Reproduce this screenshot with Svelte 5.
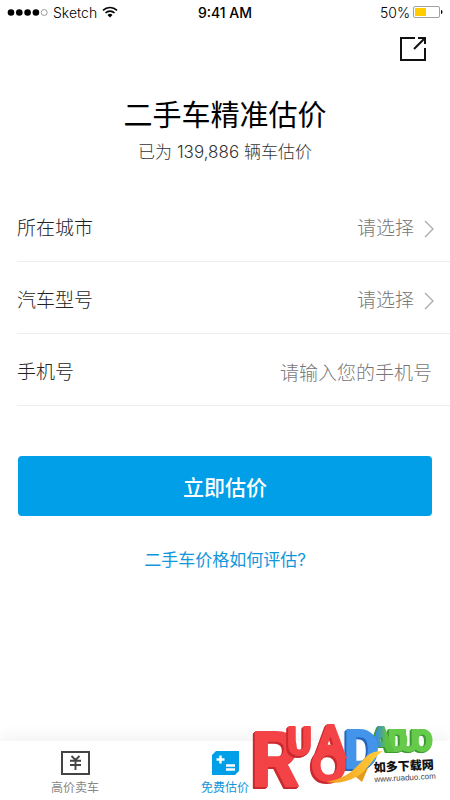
<script lang="ts">
const rows = [
	{ id: 'city', label: '所在城市' },
	{ id: 'model', label: '汽车型号' },
];

let phone = $state('');
</script>

<div class="screen">
	<header class="status-bar">
		<div class="carrier">
			<svg width="41" height="9" viewBox="0 0 41 9" aria-hidden="true">
				<circle cx="4" cy="4.5" r="3.3" />
				<circle cx="12.3" cy="4.5" r="3.3" />
				<circle cx="20.6" cy="4.5" r="3.3" />
				<circle cx="28.9" cy="4.5" r="3.3" />
				<circle cx="37.2" cy="4.5" r="3" fill="none" stroke="#777" stroke-width=".7" />
			</svg>
			<span>Sketch</span>
			<svg width="16" height="12" viewBox="0 0 16 12" aria-hidden="true">
				<path d="M1 4.4a10 10 0 0 1 14 0M3.5 7a6.4 6.4 0 0 1 9 0" fill="none" stroke="#000" stroke-width="1.6" />
				<path d="M5.5 8.9a3.6 3.6 0 0 1 5 0L8 11.4z" />
			</svg>
		</div>
		<time>9:41 AM</time>
		<div class="battery">
			<span>50%</span>
			<svg width="30" height="12" viewBox="0 0 30 12" aria-hidden="true">
				<rect x=".5" y=".5" width="26" height="11" rx="1.5" fill="#fff" stroke="#888" stroke-width=".8" />
				<rect x="2" y="2" width="11" height="8" fill="#fc0" />
				<path d="M28 4q1.5 0 1.5 2T28 8z" />
			</svg>
		</div>
	</header>

	<div class="toolbar">
		<button class="share" aria-label="分享">
			<svg width="28" height="26" viewBox="0 0 28 26" fill="none" stroke="#111" stroke-width="2">
				<path d="M16 2H2v22h24V12" />
				<path d="M19 2h7v6M25.5 2.5 15 13" />
			</svg>
		</button>
	</div>

	<main>
		<h1>二手车精准估价</h1>
		<p class="count">已为 139,886 辆车估价</p>

		<form onsubmit={(e) => e.preventDefault()}>
			{#each rows as row}
				<div class="row">
					<span id={row.id}>{row.label}</span>
					<button type="button" class="picker" aria-describedby={row.id}>
						请选择
						<svg width="10" height="18" viewBox="0 0 10 18" fill="none" stroke="#aaa" stroke-width="1.3" aria-hidden="true">
							<path d="m1 1 8 8-8 8" />
						</svg>
					</button>
				</div>
			{/each}
			<div class="row">
				<label for="phone">手机号</label>
				<input id="phone" type="tel" placeholder="请输入您的手机号" bind:value={phone} />
			</div>
			<button class="submit">立即估价</button>
		</form>

		<a class="help" href="#help">二手车价格如何评估?</a>
	</main>

	<nav>
		<a href="#sell">
			<svg width="29" height="24" viewBox="0 0 29 24" fill="none" stroke="#444" aria-hidden="true">
				<rect x="1" y="1" width="27" height="22" stroke-width="2" />
				<path d="m10.5 5 4 4 4-4M9 9.8h11M9 14h11M14.5 9v10" stroke-width="1.9" />
			</svg>
			<span>高价卖车</span>
		</a>
		<a class="active" href="#estimate">
			<svg width="27" height="24" viewBox="0 0 27 24" aria-hidden="true">
				<path d="M4 0h23v20l-4 4H0V4z" fill="#009fe8" />
				<path d="M8.5 4.5v8M4.5 8.5h8M14 14.5h9M14 18.5h9" stroke="#fff" stroke-width="2.4" />
			</svg>
			<span>免费估价</span>
		</a>
		<div class="brand">
			<svg width="190" height="80" viewBox="0 0 190 80" role="img" aria-label="如多下载网">
				<defs>
					<linearGradient id="blue-green">
						<stop offset=".3" stop-color="#3b8de0" />
						<stop offset=".7" stop-color="#5cc143" />
					</linearGradient>
					<linearGradient id="gold">
						<stop offset="0" stop-color="#f29a1f" />
						<stop offset="1" stop-color="#ffd13b" />
					</linearGradient>
				</defs>
				<g class="letters green">
					<text x="142" y="31" font-size="30">D</text>
					<text x="153" y="31" font-size="30">U</text>
					<text x="166" y="31" font-size="30">O</text>
					<text class="mixed" x="124" y="31" font-size="34">A</text>
				</g>
				<path d="M105 53l11 9 6-14z" fill="#e49a1c" />
				<g class="letters blue">
					<text x="98" y="48" font-size="54">D</text>
				</g>
				<g class="letters red">
					<text x="5" y="66" font-size="76">R</text>
				</g>
				<g class="letters red">
					<text x="41" y="35" font-size="38">U</text>
				</g>
				<g class="letters red">
					<text x="69" y="38" font-size="46">A</text>
				</g>
				<g class="letters red wide">
					<text x="65" y="61" font-size="46">O</text>
				</g>
				<path d="M80 62c19-4 25-9 37-22 5-6 10-9 20-9-10 6-15 20-27 26-9 5-20 7-30 5z" fill="url(#gold)" />
				<g transform="rotate(-3 128 52)">
					<text class="name" x="128" y="52">如多下载网</text>
					<text class="site" x="128" y="62">www.ruaduo.com</text>
				</g>
			</svg>
		</div>
	</nav>
</div>

<style>
	:global(body) {
		margin: 0;
		background: #fff;
	}

	.screen {
		min-height: 100vh;
		display: flex;
		flex-direction: column;
		font-family: Inter, "Noto Sans CJK SC", sans-serif;
		color: #222;
	}

	.status-bar {
		display: grid;
		grid-template-columns: 1fr auto 1fr;
		align-items: center;
		height: 24px;
		padding: 0 7px;
		font-size: 14px;
		font-weight: 300;
		color: #000;
	}

	.carrier,
	.battery {
		display: flex;
		align-items: center;
		gap: 5px;
	}

	.battery {
		justify-content: flex-end;
		gap: 3px;
	}

	time {
		font-weight: 500;
	}

	.toolbar {
		display: flex;
		justify-content: flex-end;
		padding: 12px 23px;
	}

	button {
		border: 0;
		background: none;
		padding: 0;
		font: inherit;
		cursor: pointer;
	}

	.share svg {
		display: block;
	}

	main {
		flex: 1;
		text-align: center;
	}

	h1 {
		margin: 22px 0 0;
		font-size: 29px;
		font-weight: 400;
		line-height: 40px;
		color: #000;
	}

	.count {
		margin: 4px 0 26px;
		font-size: 17px;
		font-weight: 300;
		line-height: 24px;
		color: #333;
	}

	.row {
		display: flex;
		justify-content: space-between;
		align-items: center;
		height: 72px;
		margin-left: 17px;
		padding: 6px 16px 0 0;
		box-sizing: border-box;
		border-bottom: 1px solid #eee;
		font-size: 19px;
		font-weight: 300;
		line-height: 28px;
	}

	.picker {
		display: flex;
		align-items: center;
		gap: 10px;
		color: #777;
	}

	input {
		flex: 1;
		min-width: 0;
		height: 28px;
		border: 0;
		padding: 2px 2px 0 0;
		background: none;
		font: inherit;
		text-align: right;
	}

	input::placeholder {
		color: #777;
		opacity: 1;
	}

	.submit {
		display: block;
		width: calc(100% - 36px);
		height: 60px;
		margin: 50px 18px 30px;
		border-radius: 4px;
		background: #009fe8;
		font-size: 21px;
		font-weight: 500;
		color: #fff;
	}

	.help {
		font-size: 17px;
		color: #1296db;
		text-decoration: none;
	}

	nav {
		position: relative;
		display: grid;
		grid-template-columns: repeat(3, 1fr);
		height: 59px;
		box-shadow: 0 -4px 16px rgba(0, 0, 0, 0.06);
	}

	nav a {
		display: flex;
		flex-direction: column;
		align-items: center;
		padding-top: 10px;
		font-size: 12px;
		line-height: 25px;
		color: #888;
		text-decoration: none;
	}

	nav .active {
		color: #1296db;
	}

	.brand {
		position: absolute;
		right: 14px;
		bottom: 0;
	}

	.brand svg {
		display: block;
		overflow: visible;
	}

	.letters {
		font-family: "Liberation Sans Narrow", Roboto, sans-serif;
		font-weight: 700;
		stroke-width: 2;
		stroke-linejoin: round;
	}

	.letters.wide {
		font-family: "Liberation Sans", sans-serif;
	}

	.red {
		fill: #f34346;
		stroke: #f34346;
		filter: drop-shadow(-1px 1px 0 #c9292f) drop-shadow(-1px 1px 0 #c9292f);
	}

	.blue {
		fill: #4394ea;
		stroke: #4394ea;
		filter: drop-shadow(-1px 1px 0 #2367bd) drop-shadow(-1px 1px 0 #2367bd);
	}

	.green {
		fill: #66ca4b;
		stroke: #66ca4b;
		filter: drop-shadow(-1px 1px 0 #399b31) drop-shadow(-1px 0 0 #399b31);
	}

	.mixed {
		fill: url(#blue-green);
		stroke: url(#blue-green);
	}

	.name {
		font-size: 12px;
		font-weight: 900;
		fill: #111;
	}

	.site {
		font-family: "Liberation Sans", sans-serif;
		font-size: 8px;
		fill: #444;
	}
</style>
